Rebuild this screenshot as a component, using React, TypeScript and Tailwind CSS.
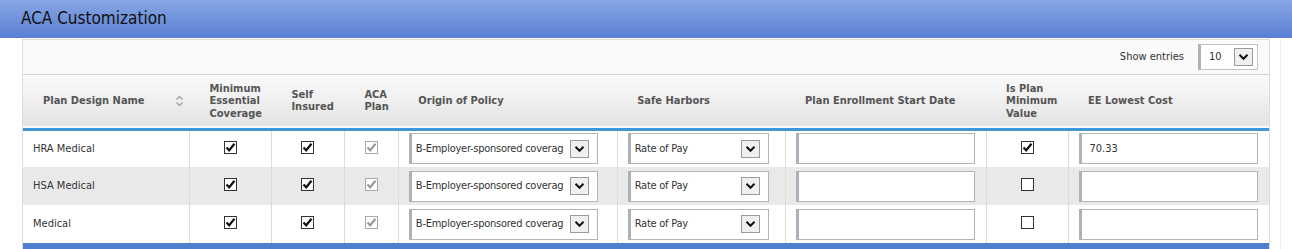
import React from 'react'

const font = { fontFamily: 'Tahoma, "DejaVu Sans Condensed", "Liberation Sans", Arial, sans-serif' }

const rows = [
  { name: 'HRA Medical', mv: true, cost: '70.33' },
  { name: 'HSA Medical', mv: false, cost: '' },
  { name: 'Medical', mv: false, cost: '' },
]

function Check({ checked, disabled }: { checked: boolean; disabled?: boolean }) {
  const c = disabled ? '#9a9a9a' : '#111'
  return (
    <span
      className={`inline-flex h-[13px] w-[13px] items-center justify-center border bg-white ${
        disabled ? 'border-[#a8a8a8]' : 'border-[#333]'
      }`}
    >
      {checked && (
        <svg width="11" height="11" viewBox="0 0 11 11">
          <path d="M1.5 5.5 L4.2 8.3 L9.5 1.8" fill="none" stroke={c} strokeWidth="2.2" />
        </svg>
      )}
    </span>
  )
}

function DropBtn() {
  return (
    <span className="flex h-[18px] w-[19px] shrink-0 items-center justify-center border border-[#9a9a9a] bg-[#f0f0f0]">
      <svg width="11" height="8" viewBox="0 0 11 8">
        <path d="M1.5 1.8 L5.5 5.8 L9.5 1.8" fill="none" stroke="#111" strokeWidth="2" />
      </svg>
    </span>
  )
}

function FakeSelect({ text, w }: { text: string; w: string }) {
  return (
    <div
      className={`flex h-[31px] ${w} items-center justify-between gap-[2px] border border-[#b4b4b4] border-l-[3px] border-l-[#aab2ba] bg-white pl-[4px] pr-[8px] text-[11px] text-[#333]`}
    >
      <span className="whitespace-nowrap tracking-[-0.25px]">{text}</span>
      <DropBtn />
    </div>
  )
}

function FakeInput({ value }: { value: string }) {
  return (
    <div className="flex h-[31px] w-[179px] items-center border border-[#b4b4b4] border-l-[3px] border-l-[#aab2ba] bg-white pl-[8px] text-[11px] text-[#333]">
      {value}
    </div>
  )
}

function SortIcon() {
  return (
    <svg width="9" height="12" viewBox="0 0 9 12" className="shrink-0">
      <path d="M1.5 4.5 L4.5 1.5 L7.5 4.5 M1.5 7.5 L4.5 10.5 L7.5 7.5" fill="none" stroke="#9a9a9a" strokeWidth="1.1" />
    </svg>
  )
}

const headers = [
  { w: 'w-[167px]', label: 'Plan Design Name', sort: true },
  { w: 'w-[82px]', label: 'Minimum Essential Coverage' },
  { w: 'w-[73px]', label: 'Self Insured' },
  { w: 'w-[54px]', label: 'ACA Plan' },
  { w: 'w-[219px]', label: 'Origin of Policy' },
  { w: 'w-[168px]', label: 'Safe Harbors' },
  { w: 'w-[201px]', label: 'Plan Enrollment Start Date' },
  { w: 'w-[82px]', label: 'Is Plan Minimum Value' },
  { w: 'w-[201px]', label: 'EE Lowest Cost' },
]

export default function App() {
  return (
    <div className="h-[249px] w-[1292px] overflow-hidden bg-white" style={font}>
      <div className="flex h-[38px] items-center bg-gradient-to-b from-[#87a6e4] to-[#5a7fd2] pl-[21px] text-[17px] text-[#111]">
        ACA Customization
      </div>
      <div className="mt-px flex">
        <div className="ml-[22px] w-[1248px] border-x border-t border-[#dcdcdc]">
          <div className="flex h-[35px] items-center justify-end border-b border-[#d0d0d0] bg-[#fafafa] pr-[11px] text-[11px] text-[#333]">
            <span className="mr-[14px]">Show entries</span>
            <div className="flex h-[26px] w-[60px] items-center justify-between border border-[#c4c4c4] border-l-[3px] border-l-[#aab2ba] bg-white pl-[8px] pr-[4px]">
              <span>10</span>
              <DropBtn />
            </div>
          </div>
          <table className="table-fixed border-collapse text-[11px]">
            <thead>
              <tr className="h-[54px] border-b-[3px] border-[#3f97d8] bg-gradient-to-b from-[#fbfbfb] to-[#e3e3e3]">
                {headers.map((h) => (
                  <th
                    key={h.label}
                    className={`${h.w} p-0 pl-[20px] text-left align-middle text-[11px] font-bold leading-[12.5px] text-[#555]`}
                  >
                    {h.sort ? (
                      <div className="flex items-center justify-between pr-[5px]">
                        <span>{h.label}</span>
                        <SortIcon />
                      </div>
                    ) : (
                      <span className="block pr-[6px]">{h.label}</span>
                    )}
                  </th>
                ))}
              </tr>
            </thead>
            <tbody>
              {rows.map((r, i) => (
                <tr key={r.name} className={`h-[38px] ${i === 1 ? 'bg-[#e9e9e9]' : 'bg-white'}`}>
                  <td className="border-r border-[#dcdcdc] pl-[10px] text-[#333]">{r.name}</td>
                  <td className="border-r border-[#dcdcdc] text-center">
                    <span className="inline-flex pt-[2px]"><Check checked /></span>
                  </td>
                  <td className="border-r border-[#dcdcdc] text-center">
                    <span className="inline-flex pt-[2px]"><Check checked /></span>
                  </td>
                  <td className="border-r border-[#dcdcdc] text-center">
                    <span className="inline-flex pt-[2px]"><Check checked disabled /></span>
                  </td>
                  <td className="border-r border-[#dcdcdc] pl-[10px]">
                    <FakeSelect text="B-Employer-sponsored coverag" w="w-[189px]" />
                  </td>
                  <td className="border-r border-[#dcdcdc] pl-[10px]">
                    <FakeSelect text="Rate of Pay" w="w-[141px]" />
                  </td>
                  <td className="border-r border-[#dcdcdc] pl-[10px]">
                    <FakeInput value="" />
                  </td>
                  <td className="border-r border-[#dcdcdc] text-center">
                    <span className="inline-flex pt-[2px]"><Check checked={r.mv} /></span>
                  </td>
                  <td className="pl-[10px]">
                    <FakeInput value={r.cost} />
                  </td>
                </tr>
              ))}
            </tbody>
          </table>
          <div className="h-[6px] bg-[#4f80d0]" />
        </div>
        <div className="ml-[10px] h-[210px] w-px bg-[#eeeeee]" />
      </div>
    </div>
  )
}
